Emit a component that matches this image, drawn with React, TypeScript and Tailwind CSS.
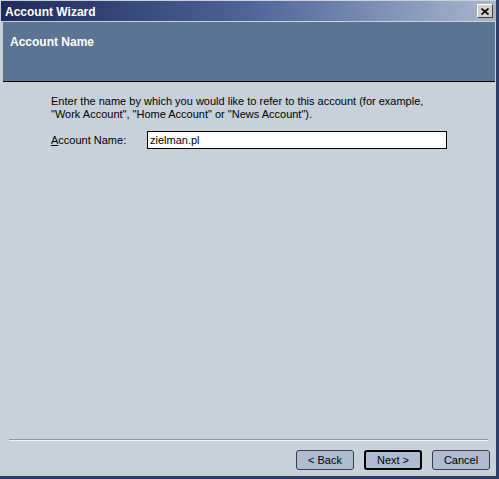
import React from 'react';

const font = { fontFamily: '"Liberation Sans", Arial, sans-serif' };

function WizButton({ label, isDefault }: { label: string; isDefault?: boolean }) {
  return (
    <button
      className={
        'h-[20px] w-[58px] rounded-[3px] bg-[#aebbd0] text-[11px] text-black leading-none flex items-center justify-center ' +
        (isDefault ? 'border-2 border-black' : 'border border-[#3a3f48]')
      }
      style={font}
    >
      {label}
    </button>
  );
}

export default function App() {
  return (
    <div
      className="w-[499px] h-[479px] bg-[#c8d0da] border-r-[3px] border-b-[3px] border-[#2e3e66] flex flex-col pt-px pl-px"
      style={font}
    >
      {/* title bar */}
      <div className="h-[20px] flex items-center justify-between pl-[4px] pr-[3px] bg-gradient-to-r from-[#1f2a5c] via-[#4f649a] to-[#a9b7cc]">
        <span className="text-white font-bold text-[12px] leading-none pt-[2px]">Account Wizard</span>
        <div className="w-[16px] h-[14px] bg-[#d4d0c8] border border-t-white border-l-white border-r-[#404040] border-b-[#404040] flex items-center justify-center">
          <svg width="8" height="7" viewBox="0 0 8 7">
            <path d="M0.5 0.5 L7.5 6.5 M7.5 0.5 L0.5 6.5" stroke="black" strokeWidth="1.6" />
          </svg>
        </div>
      </div>

      {/* header panel */}
      <div className="mt-px ml-[2px] mr-px h-[60px] bg-[#5b7491] border-b border-black pl-[7px] pt-[14px]">
        <span className="block text-white font-bold text-[12px] leading-none">Account Name</span>
      </div>

      {/* body */}
      <div className="flex-1 flex flex-col">
        <div className="ml-[50px] mt-[13px] text-[11px] leading-[13px] text-black">
          <p>Enter the name by which you would like to refer to this account (for example,</p>
          <p>"Work Account", "Home Account" or "News Account").</p>
        </div>

        <div className="ml-[50px] mt-[10px] flex items-center">
          <label className="w-[96px] text-[11px] text-black">
            <span className="underline">A</span>ccount Name:
          </label>
          <div className="w-[300px] h-[18px] bg-white border border-black flex items-center pl-[2px] text-[11px] text-black">
            zielman.pl
          </div>
        </div>

        <div className="flex-1" />

        <div className="mx-[8px] border-t border-[#8c96a4] border-b border-b-[#f2f4f7]" />

        <div className="flex justify-end gap-[10px] pr-[6px] mt-[9px] mb-[6px]">
          <WizButton label="< Back" />
          <WizButton label="Next >" isDefault />
          <WizButton label="Cancel" />
        </div>
      </div>
    </div>
  );
}
